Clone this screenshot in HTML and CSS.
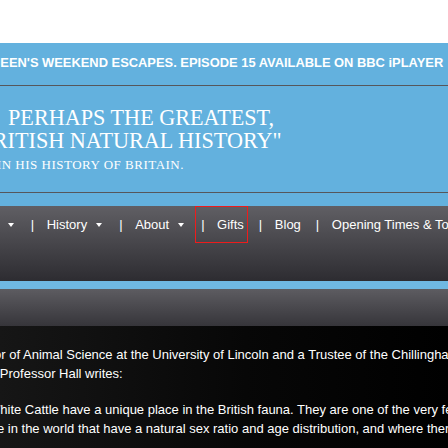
FILE: index.html
```html
<!DOCTYPE html>
<html lang="en">
<head>
<meta charset="utf-8">
<title>Chillingham Wild Cattle</title>
<link rel="stylesheet" href="styles.css">
</head>
<body>
<div class="page">
  <div class="topspace"></div>
  <header class="hero">
    <p class="announce">QUEEN'S WEEKEND ESCAPES. EPISODE 15 AVAILABLE ON BBC iPLAYER</p>
    <hr class="rule">
    <h1 class="quote">PERHAPS THE GREATEST,<br>BRITISH NATURAL HISTORY"</h1>
    <div class="cite-row"><p class="cite">SIMON SCHAMA IN HIS HISTORY OF BRITAIN.</p></div>
    <hr class="rule rule-low">
  </header>
  <nav class="nav">
    <ul class="menu">
      <li class="item"><span class="sep">|</span><span class="label">Visit</span><span class="caret"></span></li>
      <li class="item"><span class="sep">|</span><span class="label">History</span><span class="caret"></span></li>
      <li class="item"><span class="sep">|</span><span class="label">About</span><span class="caret"></span></li>
      <li class="item item-marked"><span class="sep">|</span><span class="label">Gifts</span></li>
      <li class="item"><span class="sep">|</span><span class="label">Blog</span></li>
      <li class="item"><span class="sep">|</span><span class="label">Opening Times &amp; Tours</span></li>
    </ul>
  </nav>
  <div class="strip"></div>
  <div class="band"></div>
  <main class="content">
    <p class="para para-one">Professor of Animal Science at the University of Lincoln and a Trustee of the Chillingham Wild Cattle Association,<br>its herd, Professor Hall writes:</p>
    <p class="para para-two">Wild White Cattle have a unique place in the British fauna. They are one of the very few herds of large mammals<br>anywhere in the world that have a natural sex ratio and age distribution, and where there is no selection.</p>
  </main>
</div>
</body>
</html>
```
FILE: styles.css
```css
html, body {
  margin: 0;
  padding: 0;
  overflow: hidden;
  background: #ffffff;
}

.page {
  width: 448px;
  height: 448px;
  overflow: hidden;
  font-family: "Liberation Sans", Arial, sans-serif;
}

.topspace {
  height: 43px;
  background: #ffffff;
}

.hero {
  background: #63b1de;
  padding: 12px 0 13px;
  color: #ffffff;
}

.announce {
  margin: 0 0 0 -19px;
  font-family: "Liberation Sans", Arial, sans-serif;
  font-weight: bold;
  font-size: 12.9px;
  line-height: 16px;
  white-space: nowrap;
}

.rule {
  margin: 14px 0 0;
  border: 0;
  height: 1px;
  background: #56575b;
}

.rule-low {
  margin-top: 19px;
}

.quote {
  margin: 20px 0 0 -22px;
  text-indent: 30px;
  text-align: left;
  font-family: "Liberation Serif", "Times New Roman", serif;
  font-weight: normal;
  font-size: 22.2px;
  line-height: 23px;
  white-space: nowrap;
}

.cite-row {
  display: flex;
  justify-content: flex-end;
  width: 184px;
  margin-top: 5px;
}

.cite {
  margin: 0;
  flex: none;
  font-family: "Liberation Serif", "Times New Roman", serif;
  font-size: 13px;
  letter-spacing: 0.5px;
  line-height: 16px;
  white-space: nowrap;
}

.nav {
  height: 75px;
  background: linear-gradient(#605f64, #2d2c31);
}

.menu {
  display: flex;
  margin: 0 0 0 -47.6px;
  padding: 0;
  list-style: none;
  white-space: nowrap;
}

.item {
  display: flex;
  align-items: center;
  flex: none;
  height: 37px;
  padding: 0 4px 0 6px;
  margin-right: 5px;
  color: #ffffff;
  font-size: 13px;
}

.item-marked {
  outline: 1px solid #ee1c1c;
  outline-offset: -1px;
}

.sep {
  margin-right: 12.6px;
}

.caret {
  width: 0;
  height: 0;
  margin: 0 2px 0 9px;
  border-left: 3.5px solid transparent;
  border-right: 3.5px solid transparent;
  border-top: 4px solid #ffffff;
}

.strip {
  height: 8px;
  background: #6fb8e3;
}

.band {
  height: 37px;
  background: linear-gradient(#5d5c61, #36353a);
}

.content {
  height: 200px;
  padding-top: 19px;
  background: linear-gradient(90deg, #161616, #070707 55%, #000000);
}

.para {
  margin: 0 0 17px;
  color: #ffffff;
  font-size: 13px;
  line-height: 19px;
  white-space: nowrap;
}

.para-one {
  margin-left: -50px;
}

.para-two {
  margin-left: -52.2px;
  text-indent: 11.3px;
}
```
